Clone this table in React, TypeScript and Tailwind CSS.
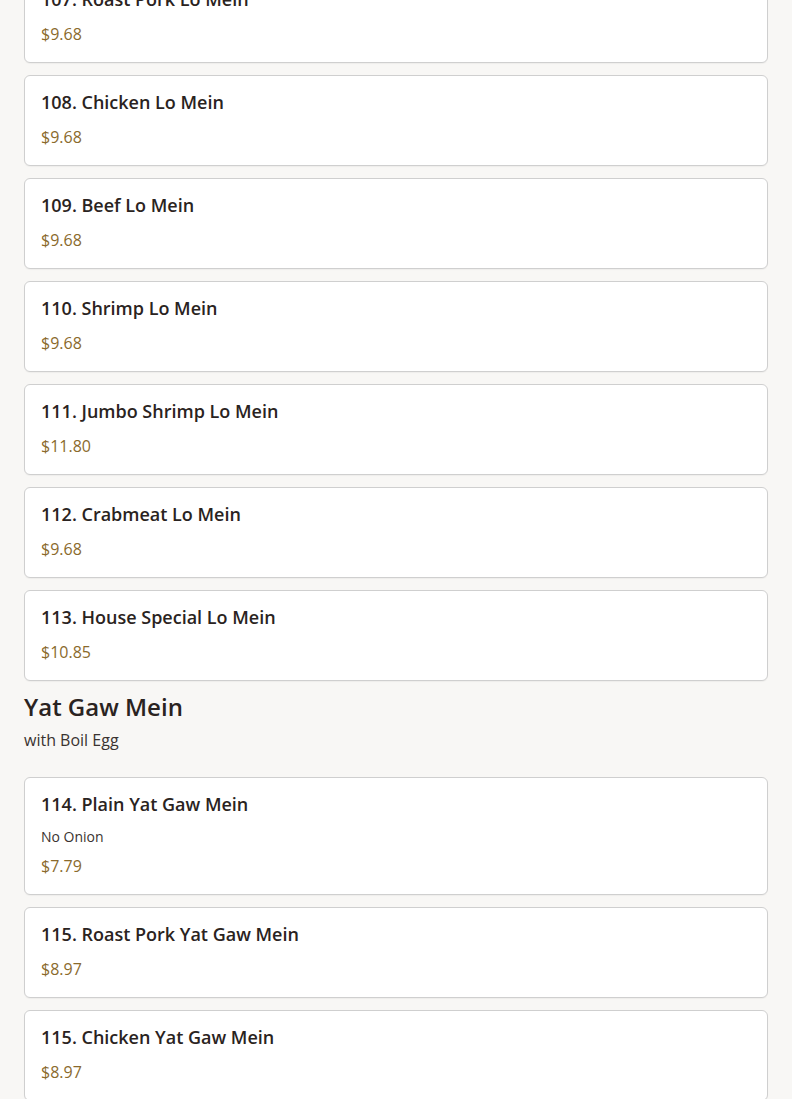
type MenuItem = {
  id: string;
  name: string;
  price: string;
  note?: string;
};

type Section = {
  title?: string;
  subtitle?: string;
  items: MenuItem[];
};

const SECTIONS: Section[] = [
  {
    items: [
      { id: "107", name: "107. Roast Pork Lo Mein", price: "$9.68" },
      { id: "108", name: "108. Chicken Lo Mein", price: "$9.68" },
      { id: "109", name: "109. Beef Lo Mein", price: "$9.68" },
      { id: "110", name: "110. Shrimp Lo Mein", price: "$9.68" },
      { id: "111", name: "111. Jumbo Shrimp Lo Mein", price: "$11.80" },
      { id: "112", name: "112. Crabmeat Lo Mein", price: "$9.68" },
      { id: "113", name: "113. House Special Lo Mein", price: "$10.85" },
    ],
  },
  {
    title: "Yat Gaw Mein",
    subtitle: "with Boil Egg",
    items: [
      { id: "114", name: "114. Plain Yat Gaw Mein", price: "$7.79", note: "No Onion" },
      { id: "115a", name: "115. Roast Pork Yat Gaw Mein", price: "$8.97" },
      { id: "115b", name: "115. Chicken Yat Gaw Mein", price: "$8.97" },
    ],
  },
];

const MenuCard = ({ item }: { item: MenuItem }) => (
  <div className="rounded-md border border-[#cfcfcf] bg-white px-4 pt-[14px] pb-4 shadow-[0_1px_1px_rgba(0,0,0,0.04)]">
    <h3 className="text-[18px] font-semibold leading-6 text-[#2a2321]">{item.name}</h3>
    {item.note && <p className="mt-[11px] text-[14px] leading-5 text-[#3a3330]">{item.note}</p>}
    <p className={`${item.note ? "mt-[7px]" : "mt-[11px]"} text-[16px] leading-6 text-[#8a6a2c]`}>{item.price}</p>
  </div>
);

export default function App() {
  return (
    <div
      className="min-h-screen bg-[#f8f7f5] px-6"
      style={{ fontFamily: '"Open Sans", "Noto Sans", sans-serif' }}
    >
      <div className="-mt-[28px] flex flex-col">
        {SECTIONS.map((section, i) => (
          <section key={i} className="flex flex-col">
            {section.title && (
              <div className="mt-[10px] mb-[25px]">
                <h2 className="text-[24px] font-semibold leading-8 text-[#2a2321]">{section.title}</h2>
                <p className="mt-[5px] text-[16px] leading-6 text-[#3a3330]">{section.subtitle}</p>
              </div>
            )}
            <div className="flex flex-col gap-3">
              {section.items.map((item) => (
                <MenuCard key={item.id} item={item} />
              ))}
            </div>
          </section>
        ))}
      </div>
    </div>
  );
}
